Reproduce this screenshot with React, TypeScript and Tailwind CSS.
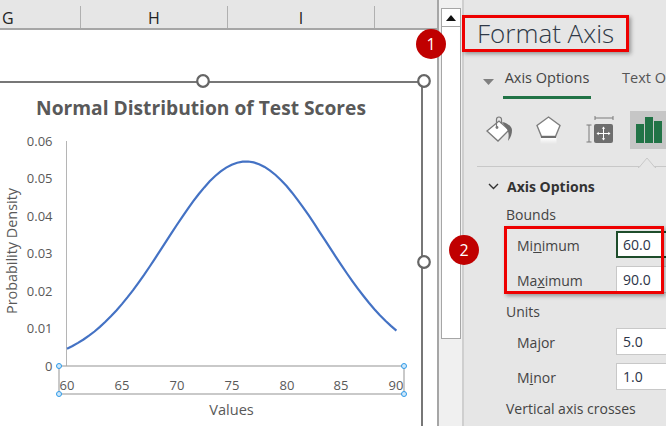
const curvePoints = () => {
  const pts: string[] = [];
  for (let v = 60; v <= 90; v += 0.5) {
    const x = 67 + (v - 60) * 10.98;
    const d = 0.0547 * Math.exp(-((v - 76.3) ** 2) / (2 * 7.29 * 7.29));
    const y = 365.5 - d * 3730;
    pts.push(`${x.toFixed(1)},${y.toFixed(1)}`);
  }
  return pts.join(" ");
};

function Chart() {
  const yTicks = [
    ["0.06", 141],
    ["0.05", 178],
    ["0.04", 216],
    ["0.03", 253],
    ["0.02", 291],
    ["0.01", 328],
    ["0", 366],
  ] as const;
  const xTicks = [
    ["60", 67],
    ["65", 122],
    ["70", 177],
    ["75", 232],
    ["80", 287],
    ["85", 341],
    ["90", 396],
  ] as const;
  const handles = [
    [203, 81],
    [424, 81],
    [424, 262],
  ];
  const small = [
    [59, 366],
    [59, 394],
    [404, 366],
    [404, 394],
  ];
  return (
    <svg viewBox="0 81 438 345" className="block w-[438px] h-[345px] overflow-visible" style={{ fontFamily: '"Open Sans", sans-serif' }}>
      <text x="201" y="115" textAnchor="middle" fontSize="19.2" fontWeight="700" fill="#595959">
        Normal Distribution of Test Scores
      </text>
      {yTicks.map(([t, y]) => (
        <text key={t} x="52.5" y={y + 4.5} textAnchor="end" fontSize="13" fill="#595959">
          {t}
        </text>
      ))}
      {xTicks.map(([t, x]) => (
        <text key={t} x={x} y={390} textAnchor="middle" fontSize="13" fill="#595959">
          {t}
        </text>
      ))}
      <text x="231.5" y="415" textAnchor="middle" fontSize="14.6" fill="#595959">
        Values
      </text>
      <text transform="translate(16.5 251) rotate(-90)" textAnchor="middle" fontSize="14.4" fill="#595959">
        Probability Density
      </text>
      <path d="M66.5 141V366" stroke="#b5b5b5" strokeWidth="1" fill="none" />
      <rect x="59" y="366" width="345" height="28" stroke="#a6a6a6" strokeWidth="1.2" fill="none" />
      <polyline points={curvePoints()} fill="none" stroke="#4472c4" strokeWidth="2.2" />
      {small.map(([x, y]) => (
        <circle key={`${x}-${y}`} cx={x} cy={y} r="2.5" fill="#cfe8fb" stroke="#2f9ae8" strokeWidth="1" />
      ))}
      {handles.map(([x, y]) => (
        <circle key={`${x}-${y}`} cx={x} cy={y} r="5.8" fill="#ffffff" stroke="#666666" strokeWidth="2.2" />
      ))}
    </svg>
  );
}

function FillIcon() {
  return (
    <svg width="28" height="28" viewBox="0 0 28 28">
      <path d="M1 15 L13 5 L23 14 L12 25 Z" fill="#fff" stroke="#7a7a7a" strokeWidth="1.3" />
      <path d="M10.5 12 V3.5 a2.5 2.5 0 0 1 5 0 V8" fill="none" stroke="#7a7a7a" strokeWidth="1.2" />
      <circle cx="11" cy="11.5" r="1.4" fill="#7a7a7a" />
      <path d="M16 6 C22 7 26 11 26 14 C26 18 25 21 22 25 C23 20 23 17 21 13 Z" fill="#6e6e6e" />
    </svg>
  );
}

function ShapeIcon() {
  return (
    <svg width="26" height="28" viewBox="0 0 26 28">
      <defs>
        <linearGradient id="fade" x1="0" x2="0" y1="0" y2="1">
          <stop offset="0" stopColor="#ffffff" />
          <stop offset="1" stopColor="#ffffff" stopOpacity="0" />
        </linearGradient>
      </defs>
      <path d="M12.5 1 L24 9.5 L19.5 20.5 H5.5 L1 9.5 Z" fill="#fff" stroke="#7f7f7f" strokeWidth="1.4" />
      <rect x="5" y="20" width="15" height="2" fill="#6e6e6e" />
      <rect x="4.5" y="22" width="16" height="6" fill="url(#fade)" />
    </svg>
  );
}

function SizeIcon() {
  return (
    <svg width="28" height="28" viewBox="0 0 28 28">
      <path d="M9 2H27M9 0V4M27 0V4" stroke="#7a7a7a" strokeWidth="1" fill="none" />
      <path d="M3 9V26M0.5 9H5.5M0.5 26H5.5" stroke="#7a7a7a" strokeWidth="1" fill="none" />
      <rect x="8" y="8" width="19" height="19" rx="2" fill="#6e6e6e" />
      <path d="M17.5 11V24M11 17.5H24" stroke="#fff" strokeWidth="1" />
      <path d="M17.5 10.5l-1.7 2.2h3.4zM17.5 24.5l-1.7-2.2h3.4zM10.5 17.5l2.2-1.7v3.4zM24.5 17.5l-2.2-1.7v3.4z" fill="#fff" />
    </svg>
  );
}

function BarsIcon() {
  return (
    <svg width="26" height="26" viewBox="0 0 26 26" className="block">
      <rect x="0" y="7" width="8" height="19" fill="#217346" />
      <rect x="9" y="0" width="8" height="26" fill="#217346" />
      <rect x="18" y="4" width="8" height="22" fill="#217346" />
    </svg>
  );
}

function Row({ label, value, active }: { label: React.ReactNode; value: string; active?: boolean }) {
  return (
    <div className="flex items-center h-[27px] shrink-0">
      <div className="w-[99px] ml-[53px] text-[14px] text-[#444444] shrink-0 pt-[2px]">{label}</div>
      <div
        className={`w-[60px] h-[27px] shrink-0 bg-white flex items-center text-[14px] text-[#2b3448] ${
          active ? "border-2 border-[#1e4d2b] pl-[5px]" : "border border-[#c8c8c8] pl-[6px]"
        }`}
      >
        {value}
      </div>
    </div>
  );
}

export default function App() {
  return (
    <div
      className="relative flex w-[666px] h-[426px] overflow-hidden bg-white"
      style={{ fontFamily: '"Open Sans", "Liberation Sans", sans-serif' }}
    >
      {/* sheet */}
      <div className="flex flex-col w-[437px] shrink-0">
        <div className="flex h-[30px] shrink-0 bg-[#e6e6e6] border-b-2 border-[#a6a6a6] text-[16px] text-[#222222]">
          <div className="w-[80px] pt-[6px] flex">
            <span className="pl-[2px] leading-[24px]">G</span>
          </div>
          <div className="w-[147px] mt-[6px] border-l border-[#b0b0b0] text-center leading-[24px]">H</div>
          <div className="w-[147px] mt-[6px] border-l border-[#b0b0b0] text-center leading-[24px]">I</div>
          <div className="flex-1 mt-[6px] border-l border-[#b0b0b0]" />
        </div>
        <div className="flex-1 pt-[51px] min-h-0">
          <div className="w-[423px] h-[345px] border-t-2 border-r-2 border-[#777777]">
            <div className="-mt-[2px]">
              <Chart />
            </div>
          </div>
        </div>
      </div>

      {/* scrollbar */}
      <div className="w-[27px] shrink-0 bg-[#f0f0f0] border-l-2 border-r-2 border-l-[#a6a6a6] border-r-[#cfcfcf] pt-[8px] pl-[2px]">
        <div className="w-[20px] h-[331px] bg-white border border-[#a6a6a6]">
          <div className="h-[18px] border-b border-[#a6a6a6] flex items-center justify-center">
            <svg width="10" height="6" viewBox="0 0 10 6">
              <path d="M5 0L10 6H0Z" fill="#111111" />
            </svg>
          </div>
        </div>
      </div>

      {/* pane */}
      <div className="flex-1 min-w-0 bg-[#e6e6e6] flex flex-col overflow-hidden">
        <div className="h-[66px] shrink-0 pl-[13px] pt-[15px] text-[26px] leading-[36px] font-light text-[#2f3947] whitespace-nowrap">
          Format Axis
        </div>
        <div className="h-[33px] shrink-0 flex items-start text-[14.5px] text-[#444444] whitespace-nowrap">
          <svg width="11" height="6" viewBox="0 0 11 6" className="ml-[19px] mt-[13px] mr-[9px] shrink-0">
            <path d="M0 0H11L5.5 6Z" fill="#808080" />
          </svg>
          <div className="w-[88px] h-[33px] border-b-[3px] border-[#217346] text-center leading-[24px] shrink-0">
            Axis Options
          </div>
          <div className="ml-[31px] leading-[24px] text-[#555555]">Text Options</div>
        </div>
        <div className="relative h-[68px] shrink-0 ml-[13px] border-b border-[#c8c8c8] flex items-start">
          <div className="mt-[17px] ml-[9px] w-[50px] shrink-0">
            <FillIcon />
          </div>
          <div className="mt-[17px] w-[50px] shrink-0">
            <ShapeIcon />
          </div>
          <div className="mt-[17px] w-[44px] shrink-0">
            <SizeIcon />
          </div>
          <div className="mt-[12px] w-[40px] h-[38px] shrink-0 bg-[#c6c6c6] pl-[6px] pt-[6px]">
            <BarsIcon />
          </div>
          <svg width="18" height="11" viewBox="0 0 18 11" className="absolute left-[161px] top-[58px]">
            <path d="M0 10.5H1L9 1L17 10.5H18" fill="#e6e6e6" stroke="#c8c8c8" strokeWidth="1" />
          </svg>
        </div>
        <div className="h-[5px] shrink-0" />
        <div className="h-[28px] shrink-0 flex items-center text-[14px] font-bold text-[#333333]">
          <svg width="11" height="7" viewBox="0 0 11 7" className="ml-[24px] mr-[8px] shrink-0">
            <path d="M1 1L5.5 5.5L10 1" fill="none" stroke="#333333" strokeWidth="1.4" />
          </svg>
          Axis Options
        </div>
        <div className="h-[31px] shrink-0 pl-[42px] text-[14px] leading-[30px] text-[#444444]">Bounds</div>
        <Row
          active
          value="60.0"
          label={
            <>
              Mi<span className="underline">n</span>imum
            </>
          }
        />
        <div className="h-[8px] shrink-0" />
        <Row
          value="90.0"
          label={
            <>
              Ma<span className="underline">x</span>imum
            </>
          }
        />
        <div className="h-[35px] shrink-0 pl-[42px] pt-[1px] text-[14px] leading-[35px] text-[#444444]">Units</div>
        <Row
          value="5.0"
          label={
            <>
              Ma<span className="underline">j</span>or
            </>
          }
        />
        <div className="h-[8px] shrink-0" />
        <Row
          value="1.0"
          label={
            <>
              M<span className="underline">i</span>nor
            </>
          }
        />
        <div className="h-[38px] shrink-0 pl-[42px] text-[14px] leading-[38px] text-[#444444] whitespace-nowrap">
          Vertical axis crosses
        </div>
      </div>

      {/* annotations */}
      <div className="absolute left-[462px] top-[15px] w-[167px] h-[37px] border-[3px] border-[#ee0000] shadow-[2px_2px_4px_rgba(0,0,0,0.35)]" />
      <div className="absolute left-[504px] top-[226px] w-[160px] h-[68px] border-[3px] border-[#ee0000] shadow-[2px_2px_4px_rgba(0,0,0,0.35)]" />
      <div className="absolute left-[416px] top-[29px] w-[30px] h-[30px] rounded-full bg-[#c00000] text-white text-[16px] flex items-center justify-center">
        1
      </div>
      <div className="absolute left-[449px] top-[235px] w-[30px] h-[30px] rounded-full bg-[#c00000] text-white text-[16px] flex items-center justify-center">
        2
      </div>
    </div>
  );
}
